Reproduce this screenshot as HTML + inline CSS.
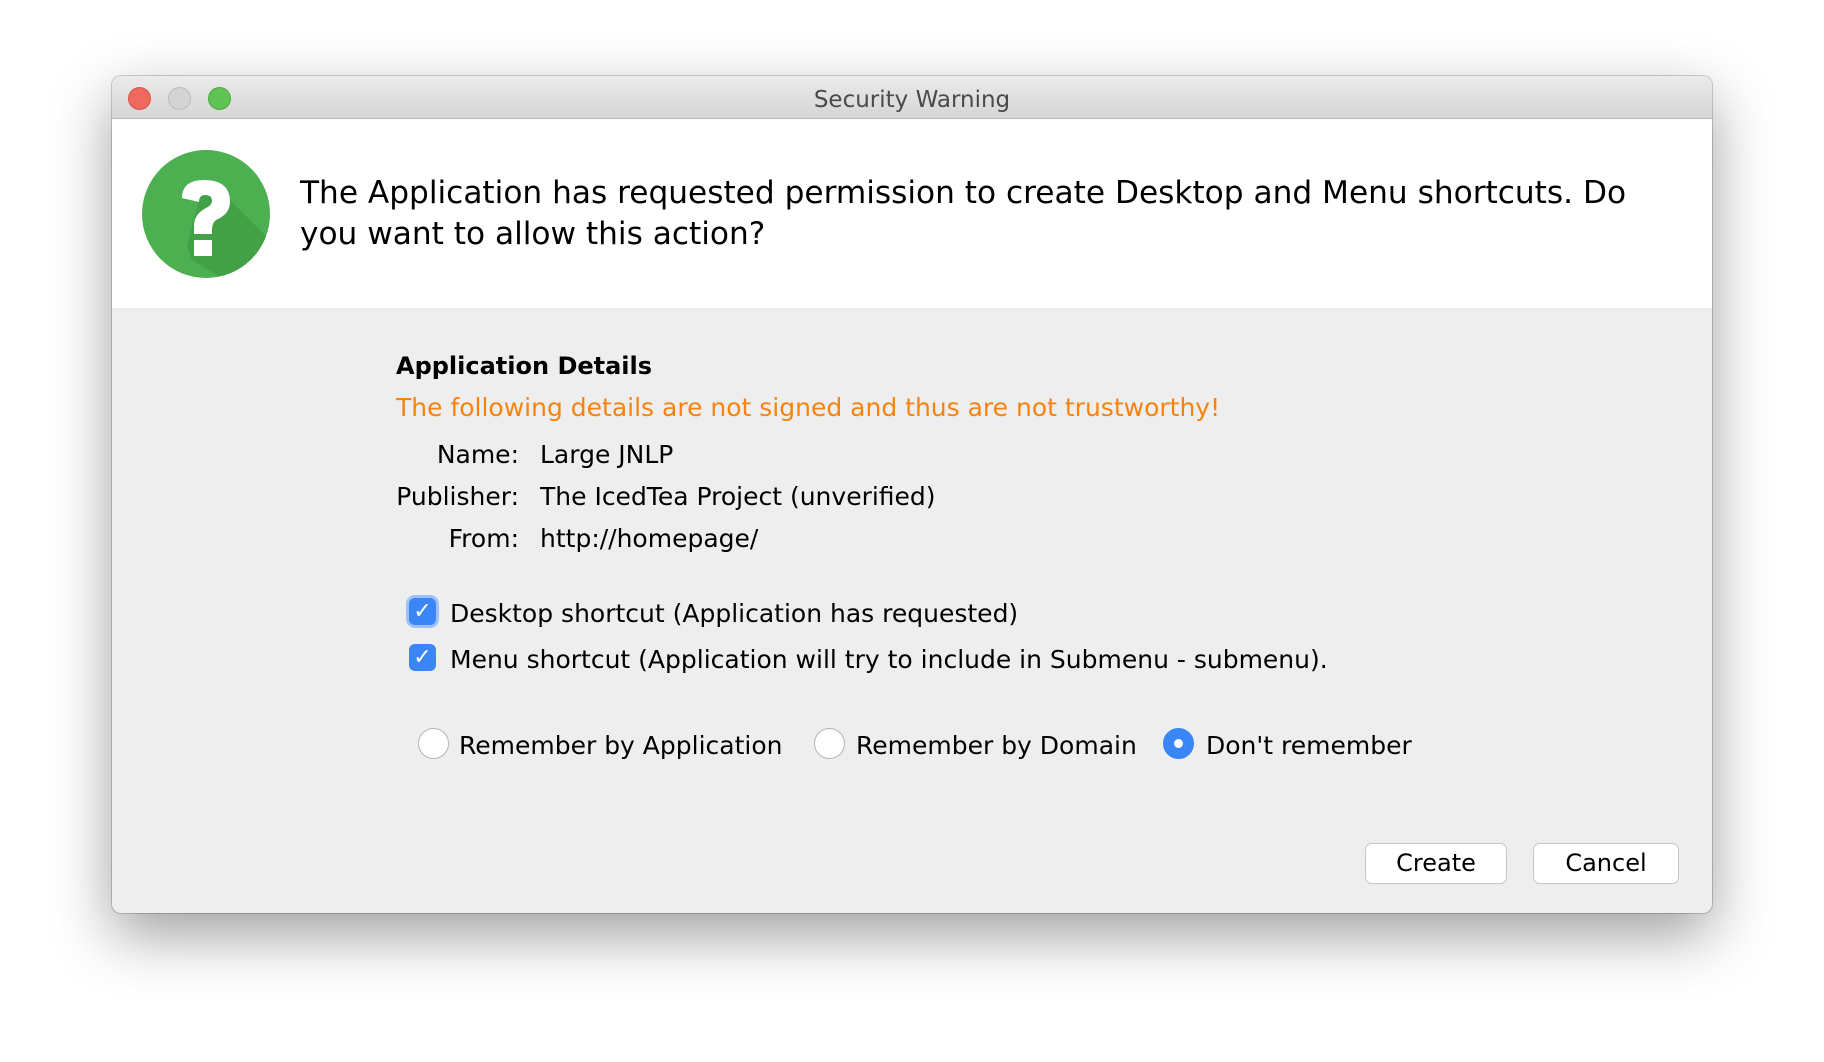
<!DOCTYPE html>
<html><head><meta charset="utf-8"><style>
*{margin:0;padding:0;box-sizing:border-box}
body{width:1824px;height:1062px;background:#fff;position:relative;overflow:hidden;font-family:"DejaVu Sans","Liberation Sans",sans-serif;color:#000}
.win{position:absolute;left:112px;top:76px;width:1600px;height:837px;border-radius:9px;background:#eeeeee;box-shadow:0 22px 60px rgba(0,0,0,.38),0 0 0 1px rgba(0,0,0,.18);overflow:hidden}
.tb{position:absolute;left:0;top:0;width:100%;height:43px;background:linear-gradient(#ebebeb,#d5d5d5);border-bottom:1px solid #b8b8b8;text-align:center;font-size:23px;line-height:49px;color:#4a4a4a}
.dot{position:absolute;top:11px;width:23px;height:23px;border-radius:50%}
.hd{position:absolute;left:0;top:43px;width:100%;height:189px;background:#fff}
.a{position:absolute;white-space:nowrap}
.t{font-size:25px}
.cb{position:absolute;width:27px;height:27px;border-radius:6px;background:#3b86f7;color:#fff;font-size:22px;text-align:center;line-height:27px}
.rd{position:absolute;width:31px;height:31px;border-radius:50%;background:#fff;border:1px solid #b5b5b5}
.btn{position:absolute;height:39px;background:#fff;border-radius:6px;box-shadow:0 0 0 1px #c8c8c8,0 1px 1px rgba(0,0,0,.15);font-size:24px;text-align:center;line-height:39px}
</style></head><body>
<div class="win">
 <div class="tb">Security Warning
  <div class="dot" style="left:16px;background:#ee6a5f;border:1px solid #d9534a"></div>
  <div class="dot" style="left:56px;background:#d4d4d4;border:1px solid #bbb"></div>
  <div class="dot" style="left:96px;background:#5fc454;border:1px solid #4aa93f"></div>
 </div>
 <div class="hd">
  <svg style="position:absolute;left:30px;top:31px" width="130" height="130" viewBox="0 0 130 130">
   <defs><clipPath id="c"><circle cx="64" cy="64" r="64"/></clipPath></defs>
   <circle cx="64" cy="64" r="64" fill="#4caf50"/>
   <polygon clip-path="url(#c)" points="62,30 88,50 140,102 100,140 50,110 45,96" fill="#3e9a43" opacity=".7"/>
   <path d="M40 48 Q40 30 62 30 Q88 30 88 52 Q88 64 74 70 Q70 73 70 80 L70 84 L52 84 L52 76 Q52 64 64 58 Q70 55 70 51 Q70 45 63 45 Q57 45 57 52 Z" fill="#fff"/>
   <rect x="52" y="90" width="18" height="16" fill="#fff"/>
  </svg>
  <div class="a" style="left:188px;top:54px;font-size:31.2px;line-height:41px">The Application has requested permission to create Desktop and Menu shortcuts. Do<br>you want to allow this action?</div>
 </div>
 <div class="a" style="left:284px;top:276px;font-size:24px;font-weight:bold">Application Details</div>
 <div class="a t" style="left:284px;top:317px;color:#f7830f">The following details are not signed and thus are not trustworthy!</div>
 <div class="a t" style="left:270px;top:364px;width:137px;text-align:right">Name:</div>
 <div class="a t" style="left:428px;top:364px">Large JNLP</div>
 <div class="a t" style="left:270px;top:406px;width:137px;text-align:right">Publisher:</div>
 <div class="a t" style="left:428px;top:406px">The IcedTea Project (unverified)</div>
 <div class="a t" style="left:270px;top:448px;width:137px;text-align:right">From:</div>
 <div class="a t" style="left:428px;top:448px">http://homepage/</div>
 <div class="cb" style="left:297px;top:522px;box-shadow:0 0 0 3px #9cc2f7">✓</div>
 <div class="a t" style="left:338px;top:523px">Desktop shortcut (Application has requested)</div>
 <div class="cb" style="left:297px;top:568px">✓</div>
 <div class="a t" style="left:338px;top:569px">Menu shortcut (Application will try to include in Submenu - submenu).</div>
 <div class="rd" style="left:306px;top:652px"></div>
 <div class="a t" style="left:347px;top:655px">Remember by Application</div>
 <div class="rd" style="left:702px;top:652px"></div>
 <div class="a t" style="left:744px;top:655px">Remember by Domain</div>
 <div class="rd" style="left:1051px;top:652px;background:#3b86f7;border-color:#3b86f7"><div style="position:absolute;left:10px;top:10px;width:9px;height:9px;border-radius:50%;background:#fff"></div></div>
 <div class="a t" style="left:1094px;top:655px">Don't remember</div>
 <div class="btn" style="left:1254px;top:768px;width:140px">Create</div>
 <div class="btn" style="left:1422px;top:768px;width:144px">Cancel</div>
</div>
</body></html>
